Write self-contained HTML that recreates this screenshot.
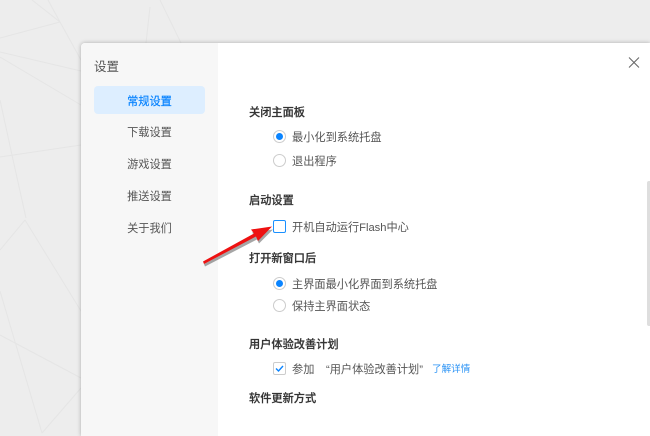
<!DOCTYPE html>
<html><head><meta charset="utf-8">
<style>
*{box-sizing:border-box}
html,body{margin:0;padding:0}
body{width:650px;height:436px;overflow:hidden;position:relative;background:#ededed;font-family:"Liberation Sans","Noto Sans CJK SC",sans-serif;color:#444}
.bg{position:absolute;left:0;top:0}
.dlg{position:absolute;left:81px;top:43px;width:569px;height:393px;background:#fff;border-radius:4px 0 0 0;box-shadow:0 0 4px rgba(0,0,0,.28)}
.side{position:absolute;left:0;top:0;width:137px;height:393px;background:#f7f7f7;border-radius:4px 0 0 0}
.t{position:absolute;white-space:nowrap;line-height:16px;font-size:11.2px}
.n{left:0;width:137px;text-align:center;color:#555}
.h{left:168px;color:#333;font-weight:500;-webkit-text-stroke:.2px #333}
.o{left:192px;color:#555}
.act{position:absolute;left:13px;top:43px;width:111px;height:28px;background:#ddeeff;border-radius:4px}
.r{position:absolute;left:192px;width:13px;height:13px;border-radius:50%;border:1px solid #ccc;background:#fff}
.r.on::after{content:"";position:absolute;left:2px;top:2px;width:7px;height:7px;border-radius:50%;background:#0a84ff}
.c{position:absolute;left:192px;width:13px;height:13px;border-radius:2px;background:#fff}
.sb{position:absolute;left:647px;top:181px;width:3px;height:145px;background:#dedede;border-radius:2px 0 0 2px}
.ov{position:absolute;left:0;top:0}
</style></head><body>
<svg class="bg" width="650" height="436" fill="none" stroke="#e5e5e5" stroke-width="1">
<path d="M32 0L60 22L81 60M48 0L60 22M60 22L0 38M0 52L81 71M0 57L81 105M0 157L81 145M0 100L12 155L26 218M160 0L181 43M150 7L146 43M25 220L81 311M0 291L42 433M0 335L81 378M42 433L81 388M25 220L0 250"/>
</svg>
<div class="dlg">
<div class="side"></div>
<div class="act"></div>
<div class="t" style="left:13px;top:16px;font-size:12.5px;color:#555">设置</div>
<div class="t n" style="top:51px;color:#0a84ff;-webkit-text-stroke:.2px #0a84ff">常规设置</div>
<div class="t n" style="top:82px">下载设置</div>
<div class="t n" style="top:114px">游戏设置</div>
<div class="t n" style="top:146px">推送设置</div>
<div class="t n" style="top:178px">关于我们</div>
<div class="t h" style="top:62px">关闭主面板</div>
<div class="r on" style="top:87px"></div>
<div class="t o" style="left:211px;top:87px">最小化到系统托盘</div>
<div class="r" style="top:111px"></div>
<div class="t o" style="left:211px;top:111px">退出程序</div>
<div class="t h" style="top:150px">启动设置</div>
<div class="c" style="top:177px;border:1px solid #1a90ff"></div>
<div class="t o" style="left:211px;top:177px">开机自动运行Flash中心</div>
<div class="t h" style="top:208px">打开新窗口后</div>
<div class="r on" style="top:234px"></div>
<div class="t o" style="left:211px;top:234px">主界面最小化界面到系统托盘</div>
<div class="r" style="top:256px"></div>
<div class="t o" style="left:211px;top:256px">保持主界面状态</div>
<div class="t h" style="top:294px">用户体验改善计划</div>
<div class="c" style="top:319px;border:1px solid #ccc"></div>
<svg class="ov" style="left:192px;top:319px" width="13" height="13" fill="none"><path d="M3 6.5L5.5 9L10 4" stroke="#0a84ff" stroke-width="1.4"/></svg>
<div class="t o" style="left:211px;top:319px">参加</div>
<div class="t o" style="left:245px;top:319px">“用户体验改善计划”</div>
<div class="t" style="left:351px;top:319px;font-size:9.6px;color:#2b93f5">了解详情</div>
<div class="t h" style="top:348px">软件更新方式</div>
</div>
<div class="sb"></div>
<svg class="ov" width="650" height="436" fill="none">
<path d="M629 57.500L639 67.500M639 57.500L629 67.500" stroke="#666" stroke-width="1"/>
<path d="M204 264L256 237L258 241L272 227L251 230L254 234L203 261.500Z" fill="#000" opacity=".35" transform="translate(1,2.500)"/>
<path d="M204 264L256 236.500L258 241L272 226.500L251 229.500L254 233.500L203 261.500Z" fill="#ee1111"/>
</svg>
</body></html>
